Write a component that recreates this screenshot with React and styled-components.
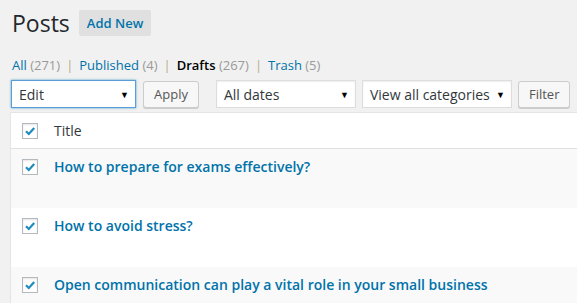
import React from "react";
import styled, { createGlobalStyle } from "styled-components";

const GlobalStyle = createGlobalStyle`
  html, body {
    margin: 0;
    padding: 0;
    background: #f1f1f1;
    font-family: "Open Sans", "Liberation Sans", sans-serif;
    color: #444;
    overflow: hidden;
  }
`;

const Page = styled.div`
  width: 577px;
  height: 303px;
  overflow: hidden;
  padding: 0 0 0 10px;
  box-sizing: border-box;
`;

const Header = styled.div`
  display: flex;
  align-items: center;
  gap: 9px;
  padding: 6px 0 0 2px;
  height: 34px;
`;

const Heading = styled.h1`
  margin: 0;
  font-size: 23px;
  font-weight: 400;
  color: #23282d;
  line-height: 29px;
`;

const AddNew = styled.a`
  display: inline-block;
  background: #e0e0e0;
  color: #0073aa;
  font-size: 13px;
  font-weight: 600;
  padding: 4px 8px;
  border-radius: 2px;
  line-height: 18px;
`;

const Views = styled.ul`
  list-style: none;
  margin: 16px 0 0 2px;
  padding: 0;
  display: flex;
  font-size: 13px;
  line-height: 18px;
`;

const View = styled.li`
  color: ${({ current }) => (current ? "#000" : "#0073aa")};
  font-weight: ${({ current }) => (current ? 600 : 400)};
`;

const Count = styled.span`
  color: #999;
  font-weight: 400;
`;

const Sep = styled.span`
  color: #b8a98e;
  margin: 0 6px;
`;

const Toolbar = styled.div`
  display: flex;
  align-items: center;
  margin-top: 6px;
  height: 28px;
`;

const Select = styled.div`
  display: flex;
  align-items: center;
  justify-content: space-between;
  box-sizing: border-box;
  width: ${({ w }) => w}px;
  height: 28px;
  margin-left: ${({ ml }) => ml || 0}px;
  padding: 0 6px 0 7px;
  background: #fff;
  border: 1px solid ${({ focus }) => (focus ? "#5b9dd9" : "#ddd")};
  box-shadow: ${({ focus }) =>
    focus ? "0 0 2px rgba(30,140,190,.8)" : "inset 0 1px 2px rgba(0,0,0,.07)"};
  font-size: 14px;
  color: #32373c;
`;

const Arrow = styled.span`
  font-size: 9px;
  color: #000;
`;

const Button = styled.div`
  box-sizing: border-box;
  height: 27px;
  margin-left: ${({ ml }) => ml || 0}px;
  padding: 0 10px;
  display: flex;
  align-items: center;
  background: #f7f7f7;
  border: 1px solid #ccc;
  border-radius: 3px;
  box-shadow: 0 1px 0 #ccc;
  font-size: 13px;
  color: #555;
`;

const Table = styled.div`
  margin-top: 4px;
  background: #fff;
  border-left: 1px solid #e5e5e5;
  border-top: 1px solid #e5e5e5;
`;

const HeadRow = styled.div`
  display: flex;
  align-items: center;
  height: 35px;
  border-bottom: 1px solid #e1e1e1;
  font-size: 14px;
  color: #32373c;
`;

const Row = styled.div`
  display: flex;
  align-items: flex-start;
  height: 59px;
  padding-top: 8px;
  box-sizing: border-box;
  background: ${({ alt }) => (alt ? "#f9f9f9" : "#fff")};
`;

const CheckCell = styled.div`
  width: 43px;
  padding-left: 11px;
  display: flex;
  align-items: center;
  box-sizing: border-box;
  height: 19px;
`;

const PostTitle = styled.a`
  font-size: 14px;
  font-weight: 600;
  color: #0073aa;
  line-height: 19px;
  white-space: nowrap;
`;

const Box = styled.span`
  display: inline-flex;
  width: 16px;
  height: 16px;
  box-sizing: border-box;
  border: 1px solid #b4b9be;
  background: #fff;
  box-shadow: inset 0 1px 2px rgba(0,0,0,.1);
  align-items: center;
  justify-content: center;
`;

const Check = () => (
  <Box>
    <svg width="12" height="12" viewBox="0 0 12 12">
      <path d="M2 6.2 L4.8 9 L10.2 3" fill="none" stroke="#1e8cbe" strokeWidth="2.2" />
    </svg>
  </Box>
);

const posts = [
  "How to prepare for exams effectively?",
  "How to avoid stress?",
  "Open communication can play a vital role in your small business",
];

export default function App() {
  return (
    <Page>
      <GlobalStyle />
      <Header>
        <Heading>Posts</Heading>
        <AddNew>Add New</AddNew>
      </Header>
      <Views>
        <View>All <Count>(271)</Count></View>
        <Sep>|</Sep>
        <View>Published <Count>(4)</Count></View>
        <Sep>|</Sep>
        <View current>Drafts <Count>(267)</Count></View>
        <Sep>|</Sep>
        <View>Trash <Count>(5)</Count></View>
      </Views>
      <Toolbar>
        <Select w={125} ml={1} focus>
          Edit <Arrow>▼</Arrow>
        </Select>
        <Button ml={7}>Apply</Button>
        <Select w={140} ml={17}>
          All dates <Arrow>▼</Arrow>
        </Select>
        <Select w={150} ml={6}>
          View all categories <Arrow>▼</Arrow>
        </Select>
        <Button ml={6}>Filter</Button>
      </Toolbar>
      <Table>
        <HeadRow>
          <CheckCell>
            <Check />
          </CheckCell>
          Title
        </HeadRow>
        {posts.map((t, i) => (
          <Row key={t} alt={i % 2 === 0}>
            <CheckCell>
              <Check />
            </CheckCell>
            <PostTitle>{t}</PostTitle>
          </Row>
        ))}
      </Table>
    </Page>
  );
}
